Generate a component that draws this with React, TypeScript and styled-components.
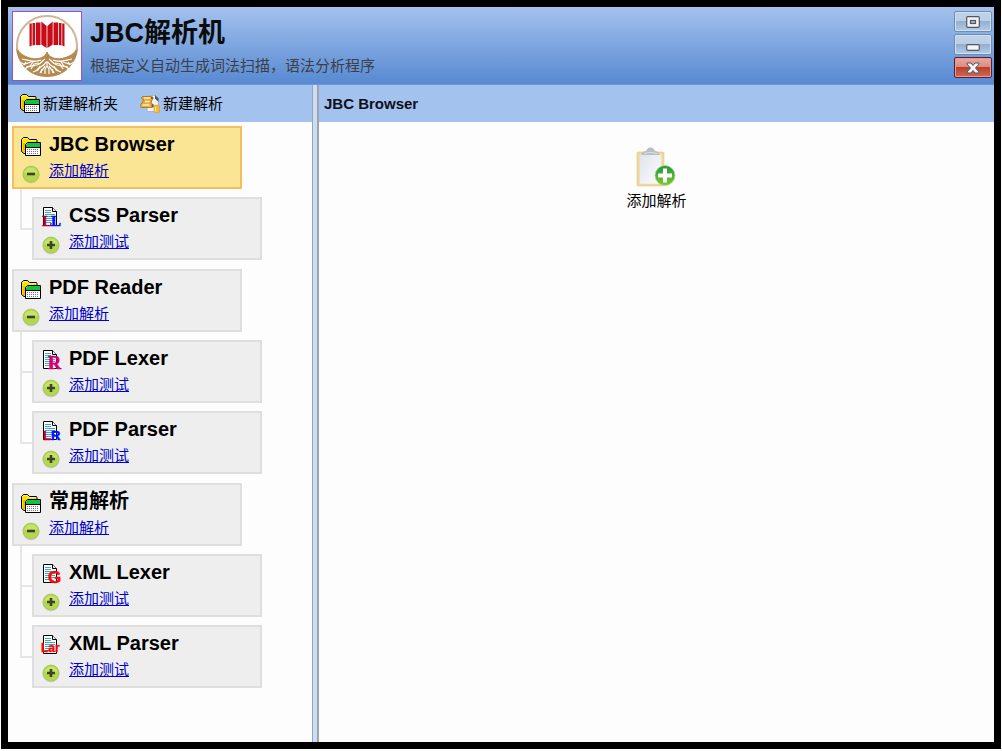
import React, { useState } from "react";
import styled, { createGlobalStyle } from "styled-components";

const GlobalStyle = createGlobalStyle`
  *, *::before, *::after { box-sizing: border-box; }
  body {
    margin: 0;
    background: #fdfdfd;
    font-family: "Liberation Sans", "Noto Sans CJK SC", sans-serif;
    font-size: 15px;
    line-height: 20px;
    color: #000;
  }
  button { font: inherit; color: inherit; }
  svg { display: block; }
`;

const Window = styled.div`
  display: flex;
  flex-direction: column;
  min-height: calc(100vh - 2px);
  margin: 0 1px 2px;
  border: 7px solid #000;
  background: #fdfdfd;
`;

const TitleBar = styled.header`
  display: flex;
  align-items: flex-start;
  height: 78px;
  padding: 4px 2px 0 4px;
  background: linear-gradient(#a4c2ee, #5789d1);
  border-bottom: 1px solid #6a97dc;
`;

const LogoFrame = styled.div`
  width: 70px;
  height: 70px;
  border: 1px solid #a94fb0;
  background: #fff;
`;

const Heading = styled.div`
  flex: 1;
  padding: 6px 0 0 8px;
`;

const AppName = styled.h1`
  margin: 0 0 7px;
  font-size: 27px;
  line-height: 32px;
  font-weight: bold;
  color: #0c0c0c;
`;

const Tagline = styled.p`
  margin: 0;
  color: #3c3f48;
`;

const WindowControls = styled.div`
  display: flex;
  flex-direction: column;
  gap: 2px;
`;

const ControlButton = styled.button<{ $danger?: boolean }>`
  display: flex;
  align-items: center;
  justify-content: center;
  width: 38px;
  height: 21px;
  padding: 0;
  border: 1px solid ${(p) => (p.$danger ? "#54203a" : "#6f8cae")};
  border-radius: 2px;
  box-shadow: inset 0 0 0 1px ${(p) => (p.$danger ? "#e59a92" : "#cfe0f2")};
  background: ${(p) =>
    p.$danger
      ? "linear-gradient(#eba79f 0, #dd8a80 48%, #b9402a 50%, #cf6a56 100%)"
      : "linear-gradient(#c0d3e8 0, #b9cfe6 48%, #94afcd 50%, #b2cdea 100%)"};
`;

const Body = styled.div`
  display: flex;
  flex: 1;
`;

const Sidebar = styled.aside`
  flex: 0 0 304px;
`;

const Splitter = styled.div`
  flex: 0 0 7px;
  background: #c9dff9;
  border: solid #a0a4aa;
  border-width: 0 2px 0 1px;
`;

const Content = styled.main`
  flex: 1;
`;

const Strip = styled.div`
  display: flex;
  align-items: center;
  height: 37px;
  background: #a4c2ee;
`;

const Toolbar = styled(Strip)`
  gap: 22px;
  padding-left: 12px;
`;

const ToolButton = styled.button`
  display: flex;
  align-items: center;
  gap: 3px;
  padding: 0;
  border: 0;
  background: none;
`;

const PanelTitle = styled.h2`
  margin: 0;
  padding-left: 5px;
  font-size: 15px;
  line-height: 20px;
  color: #0c0f1c;
`;

const Tree = styled.ul`
  display: flex;
  flex-direction: column;
  gap: 9px;
  margin: 0;
  padding: 4px;
  list-style: none;
`;

const Children = styled.ul`
  margin: 0;
  padding: 0 0 0 8px;
  list-style: none;
`;

const ChildRow = styled.li`
  display: flex;
  align-items: flex-end;
`;

const Connector = styled.div<{ $last: boolean }>`
  width: 12px;
  height: 71px;
  &::before {
    content: "";
    display: block;
    height: 41px;
    border: solid #e6e6e6;
    border-width: 0 0 2px 2px;
  }
  &::after {
    content: "";
    display: block;
    height: 30px;
    border-left: 2px solid ${(p) => (p.$last ? "transparent" : "#e6e6e6")};
  }
`;

const Card = styled.div<{ $selected?: boolean }>`
  display: grid;
  grid-template-columns: 20px 1fr;
  grid-template-rows: 28px 26px;
  column-gap: 8px;
  align-items: center;
  width: 230px;
  height: 63px;
  padding: 2px 6px 0 7px;
  border: 2px solid ${(p) => (p.$selected ? "#f7be5c" : "#dedede")};
  background: ${(p) => (p.$selected ? "#fae595" : "#eeeeee")};
`;

const CardTitle = styled.span`
  font-size: 20px;
  line-height: 24px;
  font-weight: bold;
`;

const CardLink = styled.a`
  justify-self: start;
  color: #0000cc;
  text-decoration: underline;
`;

const CardIcon = styled.span`
  align-self: end;
  padding-bottom: 2px;
`;

const Toggle = styled.button`
  align-self: end;
  width: 20px;
  height: 20px;
  padding: 0;
  border: 0;
  background: none;
`;

const AddTile = styled.button`
  display: flex;
  flex-direction: column;
  align-items: center;
  gap: 2px;
  margin: 25px auto 0;
  padding: 0;
  border: 0;
  background: none;
`;

const Logo = () => (
  <svg width="68" height="68" viewBox="0 0 68 68" aria-hidden="true">
    <defs>
      <clipPath id="soil">
        <path d="M3 36C7 42 12 45 19 46.500c7 1 13-1 15-6.500 2 5.500 8 7.500 15 6.500C56 45 61 42 65 36 65 54 51 65 34 65S3 54 3 36z" />
      </clipPath>
    </defs>
    <circle cx="34" cy="34" r="30" fill="#fff" stroke="#cdb798" strokeWidth="2" />
    <g clipPath="url(#soil)">
      <circle cx="34" cy="34" r="31" fill="#b5894f" />
      <g stroke="#fff" strokeWidth="1.200" fill="none" strokeLinejoin="round">
        <path d="M32 47c-3 2-4 5-8 6s-8 0-12 4M28 48c-5 2-9 1-13 3s-5 1-8-1M24 49c-6 1-9-1-15-2M36 47c3 2 4 5 8 6s8 0 12 4M40 48c5 2 9 1 13 3s5 1 8-1M44 49c6 1 9-1 15-2" />
        <path d="M33 50c-2 5-7 4-10 9M35 50c2 5 7 4 10 9M32 54c-1 3-4 4-5 7M36 54c1 3 4 4 5 7M34 49v5l-2 3v5M34 54l2 3v5" />
        <path d="M26 51l-5 1-3 5M42 51l5 1 3 5M20 50l-3 4-4 1M48 50l3 4 4 1M27 54l-2 4-5 2M41 54l2 4 5 2M13 50l-2 3M55 50l2 3M29 57l-1 4M39 57l1 4" />
      </g>
    </g>
    <path d="M5 38C8 43 13 45 19 46.500c7 1 13-1 15-6.500 2 5.500 8 7.500 15 6.500C55 45 60 43 63 38" fill="none" stroke="#b5894f" strokeWidth="1" />
    <g fill="#c90d18">
      <path d="M16.500 11.500h2.300v22l-2.300 1zM19.500 11h2.700v22l-2.700.5zM23 10.500h4.500V33H23zM28.300 9.500l5.300 4.500v22l-5.300-3.500z" />
      <path d="M51.500 11.500h-2.300v22l2.300 1zM48.500 11h-2.700v22l2.700.5zM45 10.500h-4.500V33H45zM39.700 9.500L34.400 14v22l5.300-3.500z" />
    </g>
  </svg>
);

const FolderIcon = () => (
  <svg width="20" height="19" viewBox="0 0 20 19" aria-hidden="true">
    <path d="M.5 14.500V2.500L2.500.5h4l2 2h6.500q1 0 1 1v2l-11 5v6h-2z" fill="#ffe000" stroke="#000" />
    <path d="M1.500 4V3L3 1.500h3l2 2h6.500" fill="none" stroke="#fff07a" />
    <rect x="2" y="6" width="2.500" height="9" fill="#f5b800" />
    <path d="M4.500 7.500l2-2h13v13h-15z" fill="#fff" stroke="#000" />
    <path d="M5 8l1.500-2H19v4H5z" fill="#0fc43f" />
    <path d="M5 10.500h14" stroke="#000" />
    <path d="M6 12.500h12M6 14.500h12M6 16.500h12" stroke="#777" strokeDasharray="1 1" />
  </svg>
);

const ScrollIcon = () => (
  <svg width="20" height="19" viewBox="0 0 20 19" aria-hidden="true">
    <path d="M8 1.500h7l3.500 3.500v12.500H7z" fill="#eef2fa" stroke="#9eadc6" strokeWidth=".8" />
    <path d="M15 1l3.500 3.500V8L15 4.500z" fill="#4a5264" />
    <path d="M3 2.500h8.500c2 0 2 3 .5 3l-1 4c3 0 3.500 4 1 4H2c-3 0-2.500-4 0-4l1.500-4C1 5.500 1 2.500 3 2.500z" fill="#e5ac42" stroke="#a36f1d" strokeWidth=".8" />
    <path d="M4 4h6M5 7.500h4.500M2.500 11h7" stroke="#ffe9ac" strokeWidth="1.500" />
    <ellipse cx="12" cy="4" rx="1" ry="1.200" fill="#8d5a14" />
    <ellipse cx="12.500" cy="11.500" rx="1" ry="1.500" fill="#8d5a14" />
    <path d="M14 12.500c0-2 5.500-2 5.500 0v5c0 2-5.500 2-5.500 0z" fill="#f5bd37" stroke="#c28a20" strokeWidth=".5" />
    <path d="M15.500 13v4.500" stroke="#ffe99a" />
  </svg>
);

type Kind = "LL" | "LR" | "R" | "G" | "Lar";

const DocIcon = ({ kind }: { kind: Kind }) => (
  <svg width="20" height="20" viewBox="0 0 20 20" aria-hidden="true" overflow="visible">
    <path d="M2.500 18.500V.5h9l4 4v14z" fill="#fff" stroke="#000" />
    <path d="M11.500.5v4h4" fill="#e8eef2" stroke="#000" />
    <path d="M4 3.500h6M4 5.500h6M4 7.500h10M4 9.500h10M4 11.500h10M4 13.500h10M4 15.500h6" stroke="#3fa6cf" />
    {kind === "LL" && (
      <g fontFamily="Liberation Serif, serif" fontWeight="bold" fontSize="15" strokeWidth=".5">
        <text x="1" y="19" fill="#b00024" stroke="#b00024">L</text>
        <text x="10" y="19" fill="#0010ff" stroke="#0010ff">L</text>
      </g>
    )}
    {kind === "LR" && (
      <g fontFamily="Liberation Sans, sans-serif" fontWeight="bold" fontSize="13" strokeWidth=".5">
        <text x="2" y="19" fill="#c00020" stroke="#c00020">L</text>
        <text x="10" y="19" fill="#0010ff" stroke="#0010ff">R</text>
      </g>
    )}
    {kind === "R" && (
      <text x="7" y="19" fontFamily="Liberation Serif, serif" fontWeight="bold" fontSize="18" fill="#d4006e" stroke="#d4006e" strokeWidth=".7">R</text>
    )}
    {kind === "G" && (
      <text x="7" y="19" fontFamily="Liberation Sans, sans-serif" fontWeight="bold" fontSize="17" fill="#ff0808" stroke="#ff0808" strokeWidth=".5">G</text>
    )}
    {kind === "Lar" && (
      <text x="0" y="17" fontFamily="Liberation Sans, sans-serif" fontWeight="bold" fontSize="12" fill="#ff0808" stroke="#ff0808" strokeWidth=".4">Lar</text>
    )}
  </svg>
);

const ToggleIcon = ({ open }: { open: boolean }) => (
  <svg width="20" height="20" viewBox="0 0 20 20" aria-hidden="true">
    <circle cx="10" cy="11" r="8.500" fill="#000" opacity=".13" />
    <circle cx="10" cy="10" r="8" fill="#b4d651" stroke="#a3c34a" strokeWidth=".7" />
    <path d="M3.500 8.500a6.800 6.800 0 0 1 13 0q-6.500 3-13 0z" fill="#cbe676" opacity=".8" />
    <path d={open ? "M6 10h8" : "M6 10h8M10 6v8"} stroke="#3d4420" strokeWidth="2.600" />
  </svg>
);

const ClipboardIcon = () => (
  <svg width="40" height="42" viewBox="0 0 40 42" aria-hidden="true">
    <defs>
      <linearGradient id="paper" x1="0" y1="0" x2="1" y2="1">
        <stop offset="0" stopColor="#e0e4ea" />
        <stop offset="1" stopColor="#fbfcfd" />
      </linearGradient>
      <linearGradient id="badge" x1="0" y1="0" x2="0" y2="1">
        <stop offset="0" stopColor="#23963c" />
        <stop offset="1" stopColor="#7fc92e" />
      </linearGradient>
    </defs>
    <rect x="1" y="5" width="27" height="34" rx="1" fill="#f3d596" stroke="#ecc980" strokeWidth=".6" />
    <path d="M3.500 7.500h22V37h-22z" fill="url(#paper)" stroke="#dcdcd6" strokeWidth=".5" />
    <path d="M6 7.500c0-3.500 4-2 5-4.500C12 0 17 0 18 3c1 2.500 5 1 5 4.500z" fill="#bbbfc2" stroke="#abafb2" strokeWidth=".5" />
    <path d="M8 6.500c6-1.500 7-1.500 13 0" stroke="#dfe2e4" fill="none" />
    <circle cx="29" cy="28.500" r="10" fill="url(#badge)" stroke="#a9dba0" strokeWidth=".8" />
    <path d="M22 28.500h14M29 21.500v14" stroke="#fff" strokeWidth="4" />
  </svg>
);

const RestoreGlyph = () => (
  <svg width="14" height="12" viewBox="0 0 14 12" aria-hidden="true">
    <rect x=".7" y=".7" width="12.600" height="10.600" rx="1" fill="#f2f2f2" stroke="#535666" strokeWidth="1.200" />
    <rect x="4.500" y="4.500" width="5" height="3" fill="#9db9d6" stroke="#535666" strokeWidth="1.200" />
  </svg>
);

const MinimizeGlyph = () => (
  <svg width="14" height="12" viewBox="0 0 14 12" aria-hidden="true">
    <rect x=".7" y="5.700" width="12.600" height="5.600" rx="1" fill="#f4f4f4" stroke="#535666" strokeWidth="1.200" />
  </svg>
);

const CloseGlyph = () => (
  <svg width="14" height="12" viewBox="0 0 14 12" aria-hidden="true">
    <path d="M1 1h4l2 2.500L9 1h4v1L9.500 6l3.500 4v1H9L7 8.500 5 11H1v-1l3.500-4L1 2z" fill="#f4f4f4" stroke="#535666" strokeWidth="1" />
  </svg>
);

interface Parser { name: string; kind: Kind }
interface Folder { name: string; parsers: Parser[] }

const folders: Folder[] = [
  { name: "JBC Browser", parsers: [{ name: "CSS Parser", kind: "LL" }] },
  { name: "PDF Reader", parsers: [{ name: "PDF Lexer", kind: "R" }, { name: "PDF Parser", kind: "LR" }] },
  { name: "常用解析", parsers: [{ name: "XML Lexer", kind: "G" }, { name: "XML Parser", kind: "Lar" }] },
];

export default function App() {
  const [selected, setSelected] = useState(folders[0].name);
  const [closed, setClosed] = useState<string[]>([]);
  const toggle = (name: string) =>
    setClosed((c) => (c.includes(name) ? c.filter((n) => n !== name) : [...c, name]));

  return (
    <>
      <GlobalStyle />
      <Window>
        <TitleBar>
          <LogoFrame><Logo /></LogoFrame>
          <Heading>
            <AppName>JBC解析机</AppName>
            <Tagline>根据定义自动生成词法扫描，语法分析程序</Tagline>
          </Heading>
          <WindowControls>
            <ControlButton aria-label="还原"><RestoreGlyph /></ControlButton>
            <ControlButton aria-label="最小化"><MinimizeGlyph /></ControlButton>
            <ControlButton $danger aria-label="关闭"><CloseGlyph /></ControlButton>
          </WindowControls>
        </TitleBar>
        <Body>
          <Sidebar>
            <Toolbar>
              <ToolButton><FolderIcon />新建解析夹</ToolButton>
              <ToolButton><ScrollIcon />新建解析</ToolButton>
            </Toolbar>
            <Tree>
              {folders.map((folder) => {
                const open = !closed.includes(folder.name);
                return (
                  <li key={folder.name}>
                    <Card $selected={folder.name === selected} onClick={() => setSelected(folder.name)}>
                      <CardIcon><FolderIcon /></CardIcon>
                      <CardTitle>{folder.name}</CardTitle>
                      <Toggle aria-label={open ? "折叠" : "展开"} onClick={() => toggle(folder.name)}>
                        <ToggleIcon open={open} />
                      </Toggle>
                      <CardLink href="#">添加解析</CardLink>
                    </Card>
                    {open && (
                      <Children>
                        {folder.parsers.map((parser, i) => (
                          <ChildRow key={parser.name}>
                            <Connector $last={i === folder.parsers.length - 1} />
                            <Card>
                              <CardIcon><DocIcon kind={parser.kind} /></CardIcon>
                              <CardTitle>{parser.name}</CardTitle>
                              <Toggle aria-label="展开"><ToggleIcon open={false} /></Toggle>
                              <CardLink href="#">添加测试</CardLink>
                            </Card>
                          </ChildRow>
                        ))}
                      </Children>
                    )}
                  </li>
                );
              })}
            </Tree>
          </Sidebar>
          <Splitter role="separator" aria-orientation="vertical" />
          <Content>
            <Strip><PanelTitle>{selected}</PanelTitle></Strip>
            <AddTile><ClipboardIcon />添加解析</AddTile>
          </Content>
        </Body>
      </Window>
    </>
  );
}
